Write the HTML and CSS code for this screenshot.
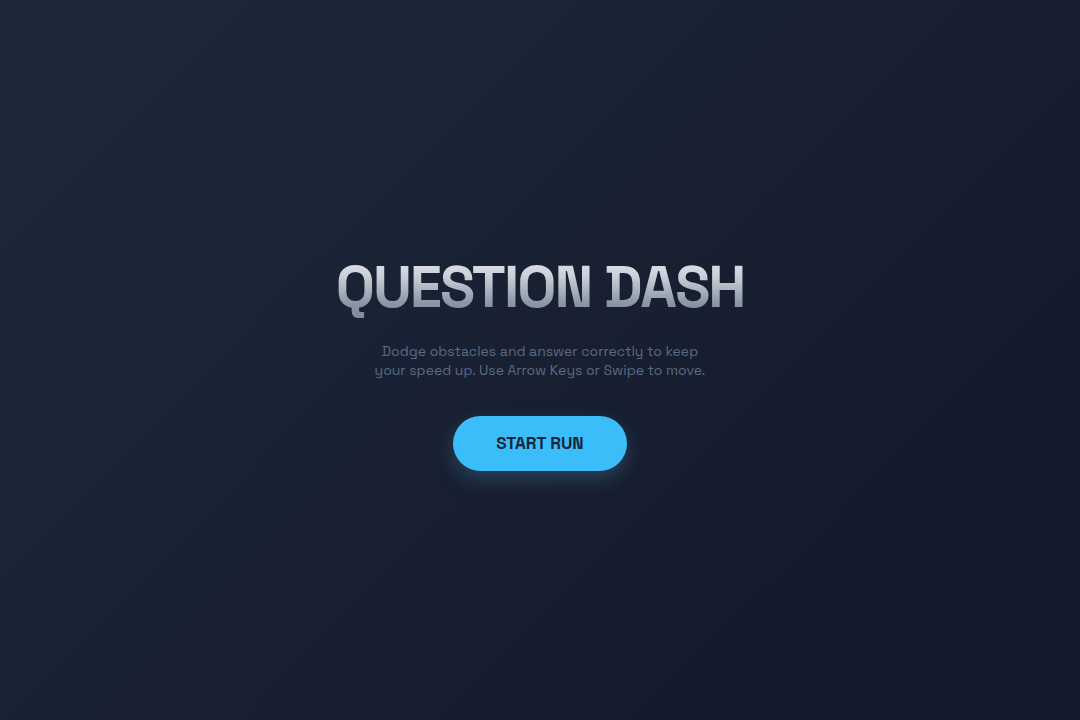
FILE: index.html
```html
<!DOCTYPE html>
<html lang="en">
<head>
<meta charset="utf-8">
<meta name="viewport" content="width=device-width, initial-scale=1">
<title>Question Dash</title>
<link rel="stylesheet" href="styles.css">
</head>
<body>
<main class="start-screen">
  <h1 class="title">QUESTION DASH</h1>
  <p class="intro">Dodge obstacles and answer correctly to keep<br>your speed up. Use Arrow Keys or Swipe to move.</p>
  <button class="start-button" type="button">START RUN</button>
</main>
</body>
</html>
```

FILE: styles.css
```css
* {
  box-sizing: border-box;
}

body {
  margin: 0;
  font-family: "Space Grotesk", Inter, "Liberation Sans", sans-serif;
}

.start-screen {
  min-height: 100vh;
  display: flex;
  flex-direction: column;
  align-items: center;
  justify-content: center;
  padding: 20px 16px 16px;
  text-align: center;
  background: linear-gradient(135deg, #1c2838 0%, #1a2536 28%, #182032 48%, #141b2d 75%, #13192c 100%);
}

.title {
  margin: 0 0 22px;
  font-size: 58px;
  line-height: 66px;
  font-weight: 700;
  letter-spacing: -2px;
  color: transparent;
  background: linear-gradient(#d8dce4 15%, #cdd2da 32%, #8a96a5 75%, #7d8a9a 100%);
  background-clip: text;
  -webkit-background-clip: text;
}

.intro {
  margin: 0 0 36px;
  font-size: 14px;
  line-height: 19px;
  color: #5a6b82;
}

.start-button {
  padding: 16px 43px;
  border: 0;
  border-radius: 28px;
  font: inherit;
  font-size: 17px;
  line-height: 23px;
  font-weight: 700;
  color: #18243a;
  background: #3abdf9;
  box-shadow: 0 8px 20px rgb(84 148 190 / 30%);
  cursor: pointer;
}
```
